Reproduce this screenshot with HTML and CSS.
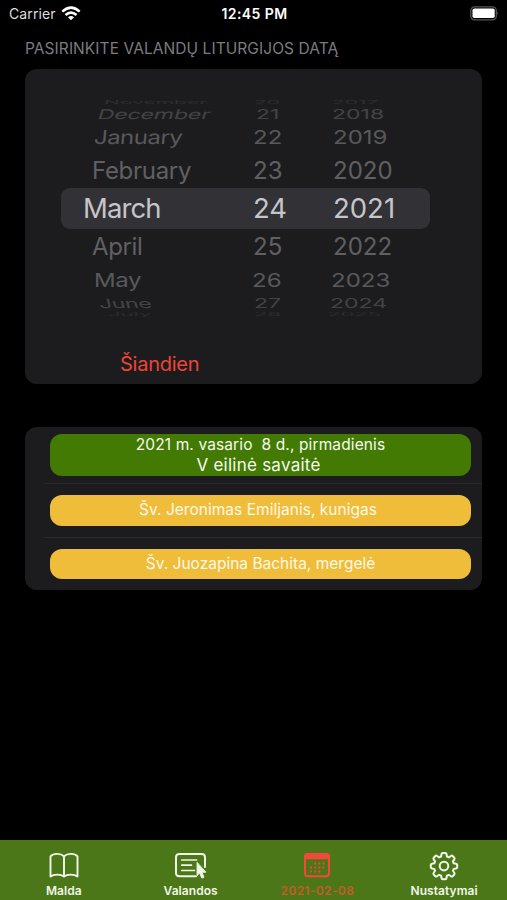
FILE: index.html
```html
<!DOCTYPE html>
<html lang="lt">
<head>
<meta charset="utf-8">
<title>Valandų liturgija</title>
<link rel="stylesheet" href="styles.css">
</head>
<body>
<div class="app">
  <header class="status">
    <div class="status-side"><span class="carrier">Carrier</span>
      <svg class="wifi" width="20" height="15" viewBox="0 0 20 15" fill="none" stroke="#fff" stroke-width="2.5"><path d="M1.3 5.6Q10-2.3 18.7 5.6"/><path d="M4.5 9Q10 4.2 15.5 9"/><path d="M7 11.3Q10 8.8 13 11.3L10 14.3Z" fill="#fff" stroke="none"/></svg>
    </div>
    <span class="clock">12:45 PM</span>
    <div class="status-side status-end">
      <svg width="31" height="15" viewBox="0 0 31 15"><rect x="1.8" y=".8" width="25.500" height="13" rx="3.8" fill="none" stroke="#56565a" stroke-width="1.3"/><rect x="3.5" y="2.5" width="22.200" height="9.6" rx="1.8" fill="#fff"/><path d="M28.5 5Q30.3 7.3 28.5 9.6Z" fill="#66666a"/></svg>
    </div>
  </header>
  <main>
    <h1 class="heading">PASIRINKITE VALANDŲ LITURGIJOS DATĄ</h1>
    <section class="card picker-card">
      <div class="wheel">
        <div class="row r1"><span>November</span><span>20</span><span>2017</span></div>
        <div class="row r2"><span>December</span><span>21</span><span>2018</span></div>
        <div class="row r3"><span>January</span><span>22</span><span>2019</span></div>
        <div class="row r4"><span>February</span><span>23</span><span>2020</span></div>
        <div class="row r5"><span>March</span><span>24</span><span>2021</span></div>
        <div class="row r6"><span>April</span><span>25</span><span>2022</span></div>
        <div class="row r7"><span>May</span><span>26</span><span>2023</span></div>
        <div class="row r8"><span>June</span><span>27</span><span>2024</span></div>
        <div class="row r9"><span>July</span><span>28</span><span>2025</span></div>
      </div>
      <div class="today">Šiandien</div>
    </section>
    <section class="card list">
      <div class="item item-day"><div class="pill green"><span class="date">2021 m. vasario&nbsp; 8 d., pirmadienis</span><span class="week">V eilinė savaitė</span></div></div>
      <div class="item"><div class="pill gold"><span class="saint">Šv. Jeronimas Emiljanis, kunigas</span></div></div>
      <div class="item"><div class="pill gold"><span>Šv. Juozapina Bachita, mergelė</span></div></div>
    </section>
  </main>
  <nav class="tabs">
    <div class="tab">
      <svg width="32" height="28" viewBox="0 0 32 28" fill="none" stroke="currentColor" stroke-width="1.9" stroke-linejoin="round"><path d="M16 5.300C13 2.300 5.500 1.800 2.500 5.300V25.500C5.500 23 13 23 16 25.500C19 23 26.500 23 29.500 25.500V5.300C26.500 1.800 19 2.300 16 5.300ZM16 5.300V25.500"/></svg>
      <span>Malda</span>
    </div>
    <div class="tab">
      <svg width="32" height="28" viewBox="0 0 32 28" fill="none" stroke="currentColor" stroke-width="2" stroke-linecap="round"><path d="M21 25.200H4.500Q1 25.200 1 21.700V6.200Q1 2.900 4.500 2.900H26.500Q30 2.900 30 6.200V16"/><path d="M6.700 9H21.500M6.700 14.200H16.500M6.700 19.500H19.500" stroke-width="1.700"/><path d="M22.100 11.700V24.500L24.700 22L26.800 27.100L29 26.200L26.900 21.200H30.500Z" fill="currentColor" stroke-width="1" stroke-linejoin="round"/></svg>
      <span>Valandos</span>
    </div>
    <div class="tab active">
      <svg width="28" height="28" viewBox="0 0 28 28" fill="none" stroke="currentColor"><rect x="2" y="3" width="24" height="22.200" rx="3" stroke-width="2"/><path d="M2 7.500V5Q2 3 4.500 3H23.500Q26 3 26 5V7.500Z" fill="currentColor" stroke-width="1.600"/><path d="M11.200 12.500H22.500M7 16.500H22.500M7 20.500H18.500" stroke-width="2" stroke-dasharray="1.9 2.3"/></svg>
      <span>2021-02-08</span>
    </div>
    <div class="tab">
      <svg width="30" height="30" viewBox="0 0 30 30" fill="none" stroke="currentColor" stroke-width="2" stroke-linejoin="round"><path d="M13.6 2h2.800Q17.300 2 17.500 3.200L17.900 5.500L19.900 6.400L21.900 5Q22.900 4.300 23.600 5L25.300 6.700Q26 7.400 25.300 8.400L23.900 10.400L24.700 12.300L27 12.700Q28.200 12.900 28.200 13.900V16.300Q28.200 17.300 27 17.500L24.700 17.900L23.900 19.800L25.300 21.800Q26 22.800 25.300 23.500L23.600 25.200Q22.900 25.900 21.900 25.200L19.900 23.800L17.900 24.700L17.500 27Q17.300 28.200 16.400 28.200H13.600Q12.700 28.200 12.500 27L12.100 24.700L10.100 23.800L8.100 25.200Q7.100 25.900 6.400 25.200L4.700 23.500Q4 22.800 4.700 21.800L6.100 19.800L5.300 17.900L3 17.500Q1.800 17.300 1.800 16.300V13.900Q1.800 12.900 3 12.700L5.300 12.300L6.100 10.400L4.700 8.400Q4 7.400 4.700 6.700L6.400 5Q7.100 4.300 8.100 5L10.100 6.400L12.100 5.500L12.500 3.200Q12.700 2 13.600 2Z"/><circle cx="15" cy="15.100" r="4.300"/></svg>
      <span>Nustatymai</span>
    </div>
  </nav>
</div>
</body>
</html>
```
FILE: styles.css
```css
* { box-sizing: border-box; }
body { margin: 0; background: #000; color: #fff; font-family: Inter, "Liberation Sans", sans-serif; }
.app { width: 507px; height: 900px; display: flex; flex-direction: column; overflow: hidden; }
main { flex: 1; padding: 0 25px; }
.status { height: 28px; display: flex; align-items: center; padding: 0 7px 1px 9px; font-size: 14px; }
.status-side { flex: 1; display: flex; align-items: center; gap: 5px; }
.status-end { justify-content: flex-end; }
.wifi { margin-top: -1px; }
.carrier { color: #ddd; letter-spacing: .1px; }
.clock { font-weight: 600; letter-spacing: .4px; }
.heading { margin: 0; height: 41px; padding-top: 10px; font-size: 15.5px; line-height: 21px; font-weight: 400; letter-spacing: .07px; color: #7c7c80; white-space: nowrap; }
.card { background: #1c1c1e; border-radius: 12px; }
.picker-card { height: 315px; padding: 30px 52px 0 36px; }
.wheel { height: 218px; width: 369px; white-space: nowrap; }
.row { display: grid; grid-template-rows: 100%; align-items: center; line-height: 1; color: #606063; }
.row span { display: block; transform-origin: 0 50%; }
.r1 { height: 4px; padding-left: 43px; grid-template-columns: 150px 78px 1fr; font-size: 21px; color: #2e2e31; }
.r1 span { transform: translateY(1px) scaleY(.22); }
.r2 { height: 20px; padding-left: 37px; grid-template-columns: 158px 76px 1fr; font-size: 23px; color: #444447; }
.r2 span { transform: translateY(1px) scaleY(.58); }
.r2 span:first-child { letter-spacing: -.1px; transform: translateY(1px) scaleY(.58) skewX(-10deg); }
.r3 { height: 29px; padding-left: 33px; grid-template-columns: 159px 80px 1fr; font-size: 24px; color: #59595c; }
.r3 span { transform: scaleY(.8); }
.r3 span:first-child { letter-spacing: -.5px; transform: scaleY(.8) skewX(-4deg); }
.r4 { height: 36px; padding: 1px 0 0 31px; grid-template-columns: 161px 80px 1fr; font-size: 24px; }
.r4 span:first-child { letter-spacing: -.3px; }
.r5 { height: 41px; padding: 1px 0 0 22px; grid-template-columns: 170px 80px 1fr; font-size: 27.5px; background: #323236; border-radius: 9px; color: #c5c5ca; }
.r5 span:first-child { letter-spacing: -.9px; }
.r6 { height: 35px; padding: 1px 0 0 31px; grid-template-columns: 161px 80px 1fr; font-size: 24px; }
.r6 span:first-child { letter-spacing: -.4px; }
.r7 { height: 32px; padding: 2px 0 0 33px; grid-template-columns: 158px 79px 1fr; font-size: 24px; color: #59595c; }
.r7 span { transform: scaleY(.8); }
.r7 span:first-child { letter-spacing: -.4px; }
.r8 { height: 15px; padding-left: 38px; grid-template-columns: 155px 76px 1fr; font-size: 23px; color: #434346; }
.r8 span { transform: scaleY(.55); }
.r8 span:first-child { letter-spacing: -.4px; transform: scaleY(.55) skewX(8deg); }
.r9 { height: 6px; padding-left: 47px; grid-template-columns: 146px 73px 1fr; font-size: 22px; color: #2c2c2f; }
.r9 span { transform: scaleY(.2); }
.today { margin: 35px 0 0 59px; font-size: 20px; line-height: 25px; letter-spacing: -.25px; color: #ee4438; }
.list { margin-top: 43px; height: 163px; padding-top: 1px; overflow: hidden; }
.item { height: 53.5px; margin-left: 19px; padding: 11px 11px 0 6px; border-bottom: 1px solid #29292b; }
.item:last-child { border-bottom: 0; }
.item-day { height: 56px; padding-top: 6px; }
.pill { height: 30.5px; border-radius: 12px; display: flex; flex-direction: column; align-items: center; justify-content: center; font-size: 15.5px; line-height: 20px; color: #fff8e8; white-space: pre; }
.green { height: 42px; background: #427a03; color: #f6fbef; }
.gold { background: #f0bd3a; }
.date { letter-spacing: .12px; }
.week { margin-right: 4px; font-size: 17px; line-height: 21px; letter-spacing: .25px; }
.saint { margin-right: 5px; letter-spacing: .03px; }
.tabs { height: 60px; display: flex; background: #4c7718; }
.tab { flex: 1; display: flex; flex-direction: column; align-items: center; justify-content: flex-end; color: #f0f6e8; font-size: 12px; line-height: 14px; font-weight: 600; letter-spacing: .05px; padding: 0 0 2px 1px; }
.tab svg { margin-bottom: 5px; }
.tab:last-child svg { margin-bottom: 3px; }
.active { color: #f1493a; }
.active span { color: #c95a2c; letter-spacing: .35px; }
```
